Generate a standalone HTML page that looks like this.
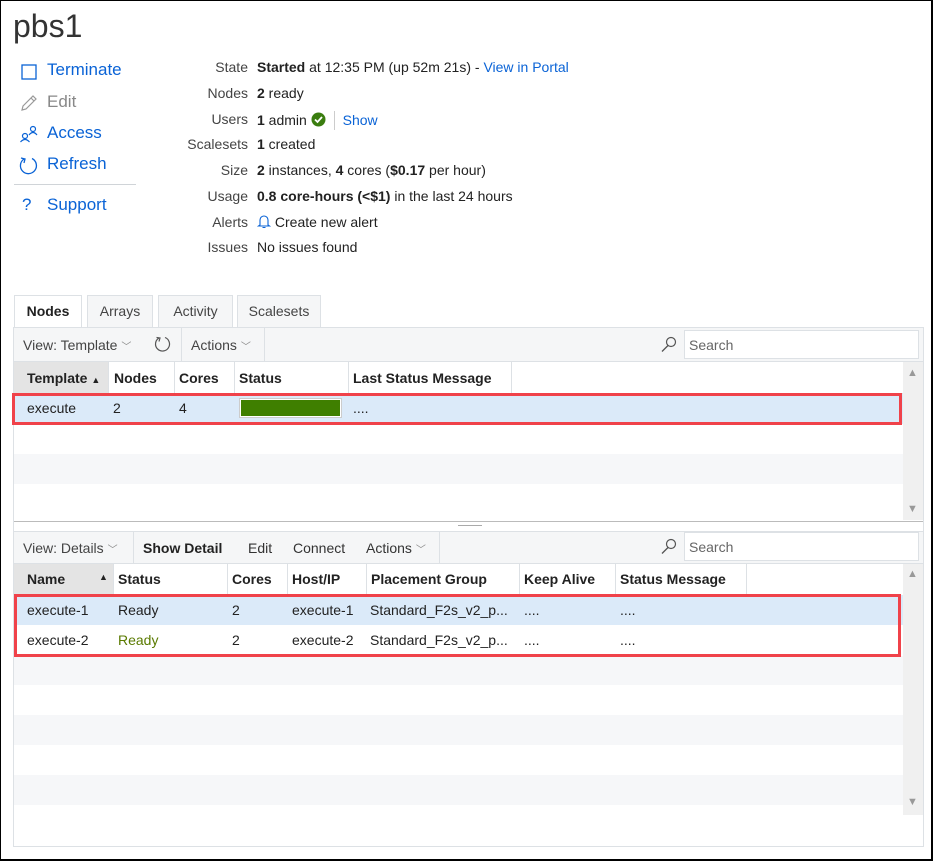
<!DOCTYPE html>
<html><head><meta charset="utf-8"><style>
*{box-sizing:border-box;margin:0;padding:0}
body{width:933px;height:861px;position:relative;background:#fff;font-family:"Liberation Sans",sans-serif;color:#222;font-size:14px;overflow:hidden}
.a{position:absolute;white-space:nowrap}
.blue{color:#0a63d6}
.lab{position:absolute;right:685px;text-align:right;color:#444;font-size:14px}
.val{position:absolute;left:257px;font-size:14px;color:#222}
.tab{position:absolute;top:295px;height:33px;border:1px solid #dde1e5;border-bottom:none;background:#f5f6f7;font-size:14px;color:#444;text-align:center;line-height:31px}
.hd{position:absolute;font-weight:bold;font-size:14px;color:#222}
.vl{position:absolute;width:1px;background:#dde1e5}
.cell{position:absolute;font-size:14px;color:#222}
.sa{position:absolute;font-size:11px;color:#999}
</style></head><body>
<div class="a" style="left:0;top:0;width:933px;height:861px;border:1px solid #000;border-width:1px 2px 2px 1px"></div>
<div class="a" style="left:13px;top:8px;font-size:32px;color:#333">pbs1</div>

<svg class="a" style="left:20px;top:63px" width="18" height="18"><rect x="2" y="2" width="14" height="14" fill="none" stroke="#0a63d6" stroke-width="1.3"/></svg>
<div class="a blue" style="left:47px;top:60px;font-size:17px">Terminate</div>
<svg class="a" style="left:19px;top:93px" width="20" height="20"><path d="M3 17 L4 13 L14 3 L17 6 L7 16 Z M12 5 L15 8" fill="none" stroke="#999" stroke-width="1.2"/></svg>
<div class="a" style="left:47px;top:92px;font-size:17px;color:#888">Edit</div>
<svg class="a" style="left:19px;top:124px" width="20" height="20"><circle cx="6" cy="12" r="2.5" fill="none" stroke="#0a63d6" stroke-width="1.2"/><path d="M1.5 18 Q6 13 10.5 18" fill="none" stroke="#0a63d6" stroke-width="1.2"/><circle cx="14" cy="5" r="2.5" fill="none" stroke="#0a63d6" stroke-width="1.2"/><path d="M10 11 Q14 6 18 11" fill="none" stroke="#0a63d6" stroke-width="1.2"/></svg>
<div class="a blue" style="left:47px;top:123px;font-size:17px">Access</div>
<svg class="a" style="left:18px;top:155px" width="22" height="22"><path d="M6 4 A8 8 0 1 0 14 3.5" fill="none" stroke="#0a63d6" stroke-width="1.3"/><path d="M3 3 L7 4 L6 8" fill="none" stroke="#0a63d6" stroke-width="1.3"/></svg>
<div class="a blue" style="left:47px;top:154px;font-size:17px">Refresh</div>
<div class="a" style="left:14px;top:184px;width:122px;height:1px;background:#d0d4d8"></div>
<div class="a blue" style="left:22px;top:195px;font-size:17px">?</div>
<div class="a blue" style="left:47px;top:195px;font-size:17px">Support</div>

<div class="lab" style="top:59px">State</div><div class="val" style="top:59px"><b>Started</b> at 12:35 PM (up 52m 21s) - <span class="blue">View in Portal</span></div>
<div class="lab" style="top:85px">Nodes</div><div class="val" style="top:85px"><b>2</b> ready</div>
<div class="lab" style="top:111px">Users</div><div class="val" style="top:111px"><b>1</b> admin <svg width="15" height="15" style="vertical-align:-2px"><circle cx="7.5" cy="7.5" r="7" fill="#3a7d0f"/><path d="M4 7.5 L6.5 10 L11 5" stroke="#fff" stroke-width="1.8" fill="none"/></svg> <span style="display:inline-block;width:1px;height:19px;background:#ccc;vertical-align:-5px;margin:0 8px 0 4px"></span><span class="blue">Show</span></div>
<div class="lab" style="top:136px">Scalesets</div><div class="val" style="top:136px"><b>1</b> created</div>
<div class="lab" style="top:162px">Size</div><div class="val" style="top:162px"><b>2</b> instances, <b>4</b> cores (<b>$0.17</b> per hour)</div>
<div class="lab" style="top:188px">Usage</div><div class="val" style="top:188px"><b>0.8 core-hours (&lt;$1)</b> in the last 24 hours</div>
<div class="lab" style="top:214px">Alerts</div><div class="val blue" style="top:214px"><svg width="14" height="15" style="vertical-align:-2px"><path d="M3 11 L3 6 A4 4 0 0 1 11 6 L11 11 L12.5 12 L1.5 12 Z M5.5 13.5 L8.5 13.5" fill="none" stroke="#0a63d6" stroke-width="1.1"/></svg> Create new alert</div>
<div class="lab" style="top:239px">Issues</div><div class="val" style="top:239px">No issues found</div>

<div class="tab" style="left:14px;width:68px;background:#fff;color:#222;font-weight:bold;height:34px">Nodes</div>
<div class="tab" style="left:87px;width:66px">Arrays</div>
<div class="tab" style="left:158px;width:75px">Activity</div>
<div class="tab" style="left:237px;width:84px">Scalesets</div>

<div class="a" style="left:13px;top:327px;width:911px;height:520px;border:1px solid #dde1e5"></div>
<div class="a" style="left:14px;top:328px;width:909px;height:34px;background:#f5f6f7;border-bottom:1px solid #dde1e5"></div>
<div class="a" style="left:23px;top:337px;color:#444">View: Template <span style="font-size:10px;color:#888">﹀</span></div>
<svg class="a" style="left:154px;top:335px" width="18" height="18"><path d="M5 3 A7 7 0 1 0 11 2.5" fill="none" stroke="#555" stroke-width="1.2"/><path d="M2.5 2.5 L6 3 L5 6.5" fill="none" stroke="#555" stroke-width="1.2"/></svg>
<div class="vl" style="left:181px;top:328px;height:34px"></div>
<div class="a" style="left:191px;top:337px;color:#444">Actions <span style="font-size:10px;color:#888">﹀</span></div>
<div class="vl" style="left:264px;top:328px;height:34px"></div>
<svg class="a" style="left:660px;top:336px" width="18" height="18"><circle cx="11" cy="6" r="4.5" fill="none" stroke="#555" stroke-width="1.2"/><path d="M8 9.5 L2 15.5" stroke="#555" stroke-width="1.3"/></svg>
<div class="a" style="left:684px;top:330px;width:235px;height:29px;background:#fff;border:1px solid #dde1e5;color:#666;padding:6px 4px;font-size:14px">Search</div>
<div class="a" style="left:14px;top:362px;width:94px;height:32px;background:#e4e4e4"></div>
<div class="a" style="left:108px;top:362px;width:795px;height:32px;border-bottom:1px solid #dde1e5"></div>
<div class="hd" style="left:27px;top:370px">Template <span style="font-size:9px">▲</span></div>
<div class="vl" style="left:108px;top:362px;height:32px"></div><div class="hd" style="left:114px;top:370px">Nodes</div>
<div class="vl" style="left:174px;top:362px;height:32px"></div><div class="hd" style="left:179px;top:370px">Cores</div>
<div class="vl" style="left:234px;top:362px;height:32px"></div><div class="hd" style="left:239px;top:370px">Status</div>
<div class="vl" style="left:348px;top:362px;height:32px"></div><div class="hd" style="left:353px;top:370px">Last Status Message</div>
<div class="vl" style="left:511px;top:362px;height:32px"></div>
<div class="a" style="left:14px;top:394px;width:889px;height:30px;background:#dbeaf9"></div>
<div class="a" style="left:14px;top:454px;width:889px;height:30px;background:#f6f7f9"></div>
<div class="a" style="left:12px;top:393px;width:890px;height:32px;border:3px solid #f0424a"></div>
<div class="cell" style="left:27px;top:400px">execute</div>
<div class="cell" style="left:113px;top:400px">2</div>
<div class="cell" style="left:179px;top:400px">4</div>
<div class="a" style="left:240px;top:399px;width:101px;height:18px;background:#3f7f00;border:1px solid #fff;outline:1px solid #ccc"></div>
<div class="cell" style="left:353px;top:400px">....</div>
<div class="a" style="left:903px;top:362px;width:20px;height:158px;background:#f0f0f0"></div>
<div class="sa" style="left:907px;top:367px">▲</div>
<div class="sa" style="left:907px;top:503px">▼</div>
<div class="a" style="left:14px;top:521px;width:909px;height:1px;background:#bbb"></div>
<div class="a" style="left:458px;top:525px;width:24px;height:1px;background:#aaa"></div>
<div class="a" style="left:14px;top:531px;width:909px;height:33px;background:#f5f6f7;border-bottom:1px solid #dde1e5;border-top:1px solid #dde1e5"></div>
<div class="a" style="left:23px;top:540px;color:#444">View: Details <span style="font-size:10px;color:#888">﹀</span></div>
<div class="vl" style="left:133px;top:531px;height:33px"></div>
<div class="a" style="left:143px;top:540px;font-weight:bold">Show Detail</div>
<div class="a" style="left:248px;top:540px;color:#333">Edit</div>
<div class="a" style="left:293px;top:540px;color:#333">Connect</div>
<div class="a" style="left:366px;top:540px;color:#333">Actions <span style="font-size:10px;color:#888">﹀</span></div>
<div class="vl" style="left:439px;top:531px;height:33px"></div>
<svg class="a" style="left:660px;top:538px" width="18" height="18"><circle cx="11" cy="6" r="4.5" fill="none" stroke="#555" stroke-width="1.2"/><path d="M8 9.5 L2 15.5" stroke="#555" stroke-width="1.3"/></svg>
<div class="a" style="left:684px;top:532px;width:235px;height:29px;background:#fff;border:1px solid #dde1e5;color:#666;padding:6px 4px">Search</div>
<div class="a" style="left:14px;top:564px;width:99px;height:31px;background:#e4e4e4"></div>
<div class="hd" style="left:27px;top:571px">Name</div><div class="a" style="left:99px;top:572px;font-size:9px">▲</div>
<div class="vl" style="left:113px;top:564px;height:31px"></div><div class="hd" style="left:118px;top:571px">Status</div>
<div class="vl" style="left:227px;top:564px;height:31px"></div><div class="hd" style="left:232px;top:571px">Cores</div>
<div class="vl" style="left:287px;top:564px;height:31px"></div><div class="hd" style="left:292px;top:571px">Host/IP</div>
<div class="vl" style="left:366px;top:564px;height:31px"></div><div class="hd" style="left:371px;top:571px">Placement Group</div>
<div class="vl" style="left:519px;top:564px;height:31px"></div><div class="hd" style="left:524px;top:571px">Keep Alive</div>
<div class="vl" style="left:615px;top:564px;height:31px"></div><div class="hd" style="left:620px;top:571px">Status Message</div>
<div class="vl" style="left:746px;top:564px;height:31px"></div>
<div class="a" style="left:14px;top:595px;width:889px;height:30px;background:#dbeaf9"></div>
<div class="a" style="left:14px;top:656px;width:889px;height:29px;background:#f6f7f9"></div>
<div class="a" style="left:14px;top:715px;width:889px;height:30px;background:#f6f7f9"></div>
<div class="a" style="left:14px;top:775px;width:889px;height:30px;background:#f6f7f9"></div>
<div class="a" style="left:14px;top:594px;width:887px;height:63px;border:3px solid #f0424a"></div>
<div class="cell" style="left:27px;top:602px">execute-1</div><div class="cell" style="left:118px;top:602px">Ready</div><div class="cell" style="left:232px;top:602px">2</div><div class="cell" style="left:292px;top:602px">execute-1</div><div class="cell" style="left:370px;top:602px">Standard_F2s_v2_p...</div><div class="cell" style="left:524px;top:602px">....</div><div class="cell" style="left:620px;top:602px">....</div>
<div class="cell" style="left:27px;top:632px">execute-2</div><div class="cell" style="left:118px;top:632px;color:#5a7a00">Ready</div><div class="cell" style="left:232px;top:632px">2</div><div class="cell" style="left:292px;top:632px">execute-2</div><div class="cell" style="left:370px;top:632px">Standard_F2s_v2_p...</div><div class="cell" style="left:524px;top:632px">....</div><div class="cell" style="left:620px;top:632px">....</div>
<div class="a" style="left:903px;top:564px;width:20px;height:251px;background:#f0f0f0"></div>
<div class="sa" style="left:907px;top:568px">▲</div>
<div class="sa" style="left:907px;top:796px">▼</div>
</body></html>
